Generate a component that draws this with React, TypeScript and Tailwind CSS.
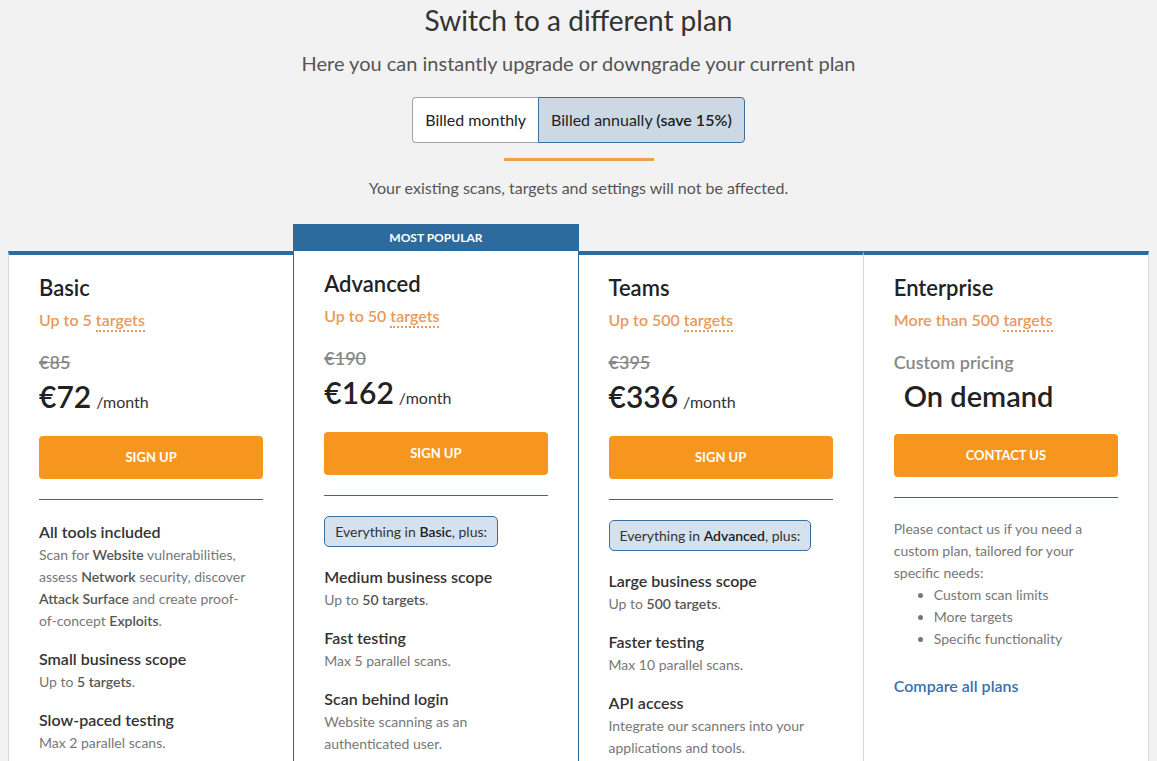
import type { ReactNode } from "react"

const blue = "border-[#2d6a9d]"

type Feature = { title: string; desc: ReactNode }

function B({ children }: { children: ReactNode }) {
  return <span className="font-semibold text-[#555]">{children}</span>
}

const basicFeatures: Feature[] = [
  {
    title: "All tools included",
    desc: (
      <>
        Scan for <B>Website</B> vulnerabilities, assess <B>Network</B> security, discover{" "}
        <B>Attack Surface</B> and create proof-<span className="whitespace-nowrap">of-concept</span>{" "}
        <B>Exploits</B>.
      </>
    ),
  },
  { title: "Small business scope", desc: <>Up to <B>5 targets</B>.</> },
  { title: "Slow-paced testing", desc: "Max 2 parallel scans." },
]

const advancedFeatures: Feature[] = [
  { title: "Medium business scope", desc: <>Up to <B>50 targets</B>.</> },
  { title: "Fast testing", desc: "Max 5 parallel scans." },
  { title: "Scan behind login", desc: "Website scanning as an authenticated user." },
]

const teamsFeatures: Feature[] = [
  { title: "Large business scope", desc: <>Up to <B>500 targets</B>.</> },
  { title: "Faster testing", desc: "Max 10 parallel scans." },
  { title: "API access", desc: "Integrate our scanners into your applications and tools." },
]

function Features({ items }: { items: Feature[] }) {
  return (
    <div className="flex flex-col gap-[15px]">
      {items.map((f) => (
        <div key={f.title}>
          <div className="text-[16px] leading-[24px] font-semibold text-[#333]">{f.title}</div>
          <div className="text-[14px] leading-[22px] text-[#777]">{f.desc}</div>
        </div>
      ))}
    </div>
  )
}

function Targets({ prefix }: { prefix: string }) {
  return (
    <div className="mt-[5px] text-[16px] leading-[24px] font-semibold text-[#e8995c]">
      {prefix}{" "}
      <span className="border-b-2 border-dotted border-[#e8995c] pb-[1px]">targets</span>
    </div>
  )
}

function Price({ old, now }: { old: string; now: string }) {
  return (
    <>
      <div className="mt-[17px] text-[18px] leading-[26px] font-semibold text-[#888] line-through">
        {old}
      </div>
      <div className="mt-[3px] flex items-baseline gap-[5px] text-[#222]">
        <span className="text-[30px] leading-[36px] font-semibold">{now}</span>
        <span className="text-[16px] text-[#333]">/month</span>
      </div>
    </>
  )
}

function Button({ label }: { label: string }) {
  return (
    <button className="mt-[22px] flex h-[43px] w-full items-center justify-center rounded-[4px] bg-[#f7961e] text-[13px] font-bold text-white">
      {label}
    </button>
  )
}

function Divider() {
  return <div className="mt-[20px] h-px bg-[#3f6580]" />
}

function Badge({ plan }: { plan: string }) {
  return (
    <div className="mb-[18px] inline-flex h-[31px] items-center rounded-[5px] border border-[#3b6e99] bg-[#d4e1ee] px-[10px] text-[14px] text-[#333]">
      Everything in&nbsp;<span className="font-semibold text-[#222]">{plan}</span>, plus:
    </div>
  )
}

export default function App() {
  return (
    <div className="min-h-screen bg-[#f2f2f2] pb-10 font-['Lato',sans-serif]">
      <div className="flex flex-col items-center">
        <h1 className="text-[28px] leading-[40px] text-[#333]">Switch to a different plan</h1>
        <p className="mt-[9px] text-[20px] leading-[28px] text-[#555]">
          Here you can instantly upgrade or downgrade your current plan
        </p>
        <div className="mt-[20px] flex h-[46px] text-[16px] text-[#222]">
          <div className="flex items-center rounded-l-[4px] border border-r-0 border-[#a0a0a8] bg-white px-[12px]">
            Billed monthly
          </div>
          <div className="flex items-center rounded-r-[4px] border border-[#3d6f9a] bg-[#ccd9e5] px-[12px]">
            Billed annually&nbsp;<span className="font-semibold">(save 15%)</span>
          </div>
        </div>
        <div className="mt-[15px] h-[3px] w-[150px] bg-[#e9a24f]" />
        <p className="mt-[15px] text-[16px] leading-[24px] text-[#555]">
          Your existing scans, targets and settings will not be affected.
        </p>
      </div>

      <div className="mx-2 mt-[24px] grid grid-cols-4">
        {/* Basic */}
        <div className={`mt-[27px] border-t-4 ${blue} border-l border-l-[#d8d8d8] bg-white pl-[30px] pr-[30px] pt-[18px] pb-10`}>
          <h2 className="text-[22px] leading-[30px] font-semibold text-[#222]">Basic</h2>
          <Targets prefix="Up to 5" />
          <Price old="€85" now="€72" />
          <Button label="SIGN UP" />
          <Divider />
          <div className="mt-[20px]">
            <Features items={basicFeatures} />
          </div>
        </div>

        {/* Advanced */}
        <div className={`flex flex-col border-x ${blue} bg-white`}>
          <div className="flex h-[27px] items-center justify-center bg-[#2d6a9d] text-[12px] font-bold text-white">
            MOST POPULAR
          </div>
          <div className="px-[30px] pt-[18px] pb-10">
            <h2 className="text-[22px] leading-[30px] font-semibold text-[#222]">Advanced</h2>
            <Targets prefix="Up to 50" />
            <Price old="€190" now="€162" />
            <Button label="SIGN UP" />
            <Divider />
            <div className="mt-[20px]">
              <Badge plan="Basic" />
              <Features items={advancedFeatures} />
            </div>
          </div>
        </div>

        {/* Teams */}
        <div className={`mt-[27px] border-t-4 ${blue} border-r border-r-[#d8d8d8] bg-white px-[30px] pt-[18px] pb-10`}>
          <h2 className="text-[22px] leading-[30px] font-semibold text-[#222]">Teams</h2>
          <Targets prefix="Up to 500" />
          <Price old="€395" now="€336" />
          <Button label="SIGN UP" />
          <Divider />
          <div className="mt-[20px]">
            <Badge plan="Advanced" />
            <Features items={teamsFeatures} />
          </div>
        </div>

        {/* Enterprise */}
        <div className={`mt-[27px] border-t-4 ${blue} border-r border-r-[#d8d8d8] bg-white px-[30px] pt-[18px] pb-10`}>
          <h2 className="text-[22px] leading-[30px] font-semibold text-[#222]">Enterprise</h2>
          <Targets prefix="More than 500" />
          <div className="mt-[17px] text-[18px] leading-[26px] font-semibold text-[#888]">
            Custom pricing
          </div>
          <div className="mt-[5px] pl-[10px] text-[29px] leading-[32px] font-semibold text-[#222]">
            On demand
          </div>
          <Button label="CONTACT US" />
          <Divider />
          <div className="mt-[20px] text-[14px] leading-[22px] text-[#777]">
            <p>Please contact us if you need a custom plan, tailored for your specific needs:</p>
            <ul className="list-disc pl-[40px] marker:text-[#777]">
              <li>Custom scan limits</li>
              <li>More targets</li>
              <li>Specific functionality</li>
            </ul>
          </div>
          <div className="mt-[24px] text-[16px] leading-[24px] font-semibold text-[#3a6fb0]">
            Compare all plans
          </div>
        </div>
      </div>
    </div>
  )
}
